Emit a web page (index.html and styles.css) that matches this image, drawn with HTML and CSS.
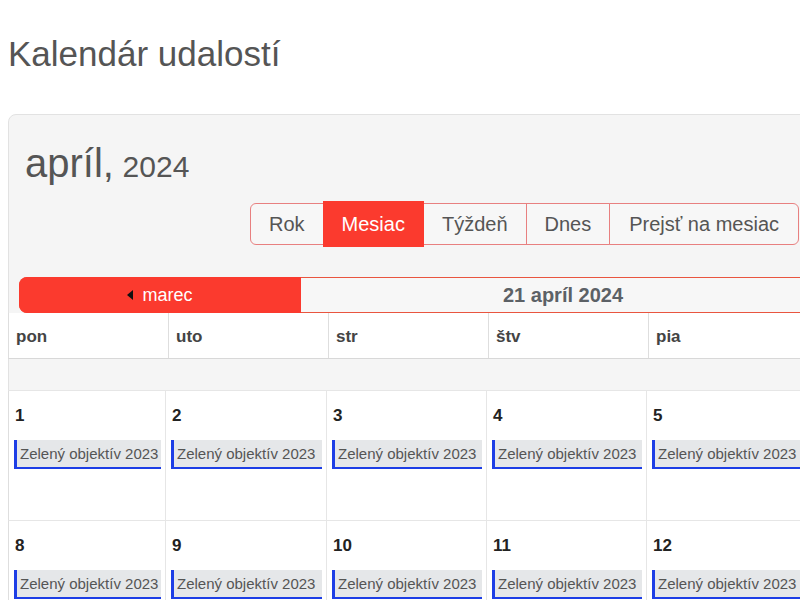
FILE: index.html
```html
<!DOCTYPE html>
<html lang="sk">
<head>
<meta charset="utf-8">
<title>Kalendár udalostí</title>
<link rel="stylesheet" href="styles.css">
</head>
<body>
<h1 class="page-title">Kalendár udalostí</h1>
<div class="calendar">
  <div class="cal-head">
    <h2 class="cal-title"><span class="month">apríl,</span> <span class="year">2024</span></h2>
    <div class="toolbar">
      <div class="btn-group">
        <button class="btn">Rok</button>
        <button class="btn active">Mesiac</button>
        <button class="btn">Týždeň</button>
        <button class="btn">Dnes</button>
        <button class="btn">Prejsť na mesiac</button>
      </div>
    </div>
  </div>
  <div class="nav-bar">
    <div class="nav-prev"><span class="tri-left"></span>marec</div>
    <div class="nav-current">21 apríl 2024</div>
    <div class="nav-next">máj<span class="tri-right"></span></div>
  </div>
  <div class="grid grid-head">
    <div class="head-cell">pon</div>
    <div class="head-cell">uto</div>
    <div class="head-cell">str</div>
    <div class="head-cell">štv</div>
    <div class="head-cell">pia</div>
    <div class="head-cell">sob</div>
    <div class="head-cell">ned</div>
  </div>
  <div class="allday"></div>
  <div class="grid grid-week">
    <div class="day"><div class="day-num">1</div><div class="event">Zelený objektív 2023</div></div>
    <div class="day"><div class="day-num">2</div><div class="event">Zelený objektív 2023</div></div>
    <div class="day"><div class="day-num">3</div><div class="event">Zelený objektív 2023</div></div>
    <div class="day"><div class="day-num">4</div><div class="event">Zelený objektív 2023</div></div>
    <div class="day"><div class="day-num">5</div><div class="event">Zelený objektív 2023</div></div>
    <div class="day"><div class="day-num">6</div><div class="event">Zelený objektív 2023</div></div>
    <div class="day"><div class="day-num">7</div><div class="event">Zelený objektív 2023</div></div>
  </div>
  <div class="grid grid-week">
    <div class="day"><div class="day-num">8</div><div class="event">Zelený objektív 2023</div></div>
    <div class="day"><div class="day-num">9</div><div class="event">Zelený objektív 2023</div></div>
    <div class="day"><div class="day-num">10</div><div class="event">Zelený objektív 2023</div></div>
    <div class="day"><div class="day-num">11</div><div class="event">Zelený objektív 2023</div></div>
    <div class="day"><div class="day-num">12</div><div class="event">Zelený objektív 2023</div></div>
    <div class="day"><div class="day-num">13</div><div class="event">Zelený objektív 2023</div></div>
    <div class="day"><div class="day-num">14</div><div class="event">Zelený objektív 2023</div></div>
  </div>
</div>
</body>
</html>
```

FILE: styles.css
```css
html {
  overflow: hidden;
  height: 100%;
}
body {
  margin: 8px 0 0 8px;
  height: 592px;
  overflow: hidden;
  font-family: "Liberation Sans", Arial, sans-serif;
  color: #555;
  background: #fff;
}
.page-title {
  font-size: 35px;
  font-weight: normal;
  line-height: 40px;
  margin: 26px 0 40px;
  color: #555;
}
.calendar {
  width: 1120px;
  border: 1px solid #e2e2e2;
  border-radius: 8px;
  background: #f5f5f5;
}
.cal-head {
  padding: 25px 16px 0;
}
.cal-title {
  margin: 0;
  font-weight: normal;
  line-height: 46px;
  color: #555;
}
.cal-title .month {
  font-size: 40px;
}
.cal-title .year {
  font-size: 30px;
  margin-left: 2px;
}
.toolbar {
  display: flex;
  padding-left: 225px;
  margin-top: 9px;
}
.btn-group {
  display: flex;
  align-items: center;
}
.btn {
  font-family: inherit;
  font-size: 20px;
  line-height: 22px;
  color: #555;
  background: #f7f7f7;
  border: 1px solid #e88080;
  padding: 9px 18px;
  margin: 0 0 0 -1px;
  cursor: pointer;
}
.btn:first-child {
  margin-left: 0;
  border-radius: 6px 0 0 6px;
}
.btn:last-child {
  border-radius: 0 6px 6px 0;
  padding-left: 19px;
  padding-right: 19px;
}
.btn.active {
  background: #fb3a2e;
  border-color: #fb3a2e;
  color: #fff;
  padding-top: 11px;
  padding-bottom: 11px;
  position: relative;
}
.nav-bar {
  display: flex;
  margin: 30px 0 0 10px;
  height: 34px;
  border: 1px solid #e9553f;
  border-radius: 8px 0 0 8px;
  background: #f7f7f7;
}
.nav-prev {
  width: 282px;
  margin: -1px 0 -1px -1px;
  background: #fb3a2e;
  border-radius: 8px 0 0 8px;
  color: #fff;
  font-size: 18px;
  display: flex;
  align-items: center;
  justify-content: center;
}
.tri-left {
  width: 0;
  height: 0;
  border-top: 5px solid transparent;
  border-bottom: 5px solid transparent;
  border-right: 6px solid #111;
  margin-right: 9px;
}
.tri-right {
  width: 0;
  height: 0;
  border-top: 5px solid transparent;
  border-bottom: 5px solid transparent;
  border-left: 6px solid #111;
  margin-left: 9px;
}
.nav-current {
  width: 524px;
  display: flex;
  align-items: center;
  justify-content: center;
  font-size: 20px;
  font-weight: bold;
  color: #5c6166;
}
.nav-next {
  width: 282px;
  display: flex;
  align-items: center;
  justify-content: center;
  font-size: 18px;
  color: #555;
}
.grid {
  display: grid;
  margin-left: -1px;
  border-left: 1px solid #dedede;
  background: #fff;
}
.grid-head {
  grid-template-columns: repeat(7, 160px);
  border-bottom: 1px solid #d8d8d8;
}
.head-cell {
  height: 45px;
  line-height: 20px;
  padding: 14px 8px 0 7px;
  box-sizing: border-box;
  border-right: 1px solid #dedede;
  font-size: 17px;
  font-weight: bold;
  color: #444;
}
.allday {
  height: 31px;
  margin-left: -1px;
  background: #f5f5f5;
  border-left: 1px solid #e2e2e2;
  border-bottom: 1px solid #e6e6e6;
}
.grid-week {
  grid-template-columns: 157px 161px repeat(5, 160px);
  border-bottom: 1px solid #e6e6e6;
}
.day {
  height: 129px;
  box-sizing: border-box;
  padding: 15px 4px 0 5px;
  border-right: 1px solid #e6e6e6;
}
.day-num {
  font-size: 17px;
  line-height: 20px;
  font-weight: bold;
  color: #222;
  padding-left: 1px;
}
.event {
  margin-top: 14px;
  background: #e5e7e9;
  border-left: 3px solid #1d3ee6;
  border-bottom: 2px solid #1d3ee6;
  padding: 5px 0 5px 3px;
  font-size: 15px;
  line-height: 17px;
  color: #555;
  white-space: nowrap;
  overflow: hidden;
}
```
